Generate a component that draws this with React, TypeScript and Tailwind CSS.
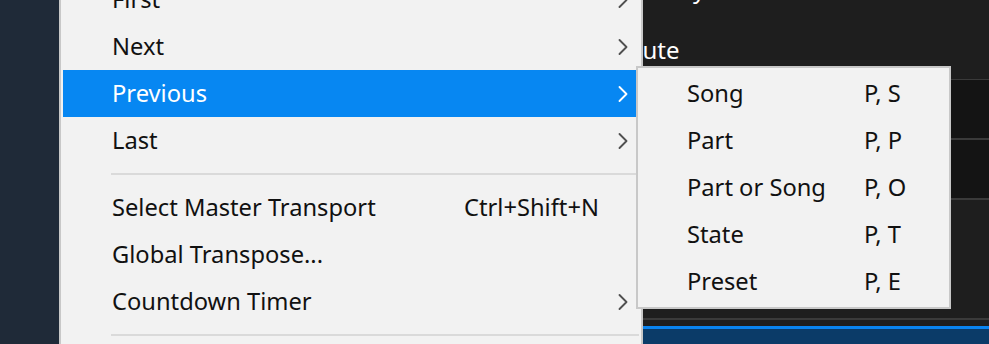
import { ChevronRight } from 'lucide-react';

type Item = { label: string; shortcut?: string; sub?: boolean; active?: boolean } | 'sep';

const mainItems: Item[] = [
  { label: 'First', sub: true },
  { label: 'Next', sub: true },
  { label: 'Previous', sub: true, active: true },
  { label: 'Last', sub: true },
  'sep',
  { label: 'Select Master Transport', shortcut: 'Ctrl+Shift+N' },
  { label: 'Global Transpose...' },
  { label: 'Countdown Timer', sub: true },
  'sep',
];

const subItems = [
  { label: 'Song', shortcut: 'P, S' },
  { label: 'Part', shortcut: 'P, P' },
  { label: 'Part or Song', shortcut: 'P, O' },
  { label: 'State', shortcut: 'P, T' },
  { label: 'Preset', shortcut: 'P, E' },
];

const font = { fontFamily: '"Noto Sans", "Open Sans", sans-serif' };

export default function App() {
  return (
    <div className="relative w-[989px] h-[344px] overflow-hidden flex bg-[#1e1e1e]" style={font}>
      {/* sidebar */}
      <div className="w-[59px] shrink-0 bg-[#1f2a38]" />

      {/* app panel behind the menus */}
      <div className="flex-1 flex flex-col">
        <div className="h-[79px] relative">
          <span className="absolute left-[606px] top-[-27px] text-[24px] leading-[32px] text-white">Key</span>
          <span className="absolute left-[554px] top-[34px] text-[24px] leading-[32px] text-white">Route</span>
        </div>
        <div className="h-[1px] bg-[#3a3a3a]" />
        <div className="h-[58px] bg-[#141414]" />
        <div className="h-[2px] bg-[#3a3a3a]" />
        <div className="h-[58px] bg-[#141414]" />
        <div className="h-[2px] bg-[#3a3a3a]" />
        <div className="h-[118px] bg-[#1e1e1e]" />
        <div className="h-[2px] bg-[#3a3a3a]" />
        <div className="h-[6px] bg-[#1e1e1e]" />
        <div className="h-[3px] bg-[#0a84f0]" />
        <div className="flex-1 bg-[#0b3b68]" />
      </div>

      {/* main menu */}
      <div className="absolute left-[59px] top-[-28px] w-[584px] bg-[#f2f2f2] border-2 border-[#c8c8c8] p-[2px] text-[23.7px]">
        {mainItems.map((it, i) =>
          it === 'sep' ? (
            <div key={i} className="h-[20px] flex items-center pl-[48px]">
              <div className="h-[2px] w-full bg-[#dadada]" />
            </div>
          ) : (
            <div
              key={i}
              className={`h-[47px] flex items-center pl-[49px] pr-[2px] ${
                it.active ? 'bg-[#0787f2] text-white' : 'text-[#111]'
              }`}
            >
              <span className="w-[352px]">{it.label}</span>
              <span className="flex-1">{it.shortcut}</span>
              {it.sub && (
                <ChevronRight
                  size={28}
                  strokeWidth={1.6}
                  className={it.active ? 'text-white' : 'text-[#505050]'}
                />
              )}
            </div>
          )
        )}
      </div>

      {/* submenu */}
      <div className="absolute left-[636px] top-[66px] w-[315px] bg-[#f2f2f2] border-2 border-[#c8c8c8] p-[2px] text-[23.7px] text-[#111]">
        {subItems.map((s) => (
          <div key={s.label} className="h-[47px] flex items-center pl-[47px]">
            <span className="w-[177px]">{s.label}</span>
            <span>{s.shortcut}</span>
          </div>
        ))}
      </div>
    </div>
  );
}
